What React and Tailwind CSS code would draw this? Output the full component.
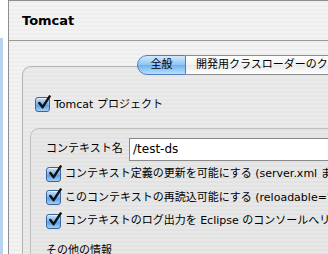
import React from "react";

const jp = { fontFamily: '"Lucida Grande", "DejaVu Sans", "Noto Sans CJK JP", sans-serif' };

function Check() {
  return (
    <div className="relative w-[15px] h-[15px] shrink-0 rounded-[3px] border border-[#35679e] bg-[linear-gradient(#c6e0fa,#76aee6_50%,#5598de_51%,#a2cff6)] shadow-[inset_0_1px_1px_rgba(255,255,255,0.7)]">
      <svg viewBox="0 0 16 16" className="absolute left-[1px] top-[-3px] w-[15px] h-[15px]">
        <path d="M2.5 8.5 L6 13 L13.5 1.5" fill="none" stroke="#111" strokeWidth="2.6" strokeLinecap="round" strokeLinejoin="round" />
      </svg>
    </div>
  );
}

function CheckRow({ children }) {
  return (
    <div className="flex items-center gap-[4px] h-[23.5px]">
      <Check />
      <span className="text-[11px] text-black whitespace-nowrap">{children}</span>
    </div>
  );
}

export default function App() {
  return (
    <div className="w-[328px] h-[254px] overflow-hidden flex bg-white" style={jp}>
      <div className="w-[8px] shrink-0 flex flex-col">
        <div className="h-[38px]" />
        <div className="w-[3px] flex-1 bg-[#b9d4ee]" />
      </div>
      <div className="flex-1 min-w-0 border-l border-t border-[#8e8e8e] bg-[repeating-linear-gradient(#eeeeee_0px,#eeeeee_2px,#f3f3f3_2px,#f3f3f3_4px)] flex flex-col">
        <div className="h-[40px] shrink-0 flex items-center pl-[13px] border-b border-[#9a9a9a]">
          <span className="text-[13px] font-bold text-black">Tomcat</span>
        </div>
        <div className="relative flex-1 pt-[25px] pl-[13px]">
          <div className="h-[200px] rounded-tl-[9px] border-l border-t border-[#b4b4b4] bg-[repeating-linear-gradient(#e6e6e6_0px,#e6e6e6_2px,#ebebeb_2px,#ebebeb_4px)] pl-[12px] pt-[26px]">
            <CheckRow>Tomcat プロジェクト</CheckRow>
            <div className="mt-[11px] ml-[-5px] h-[200px] rounded-tl-[9px] border-l border-t border-[#c0c0c0] bg-[repeating-linear-gradient(#e2e2e2_0px,#e2e2e2_2px,#e8e8e8_2px,#e8e8e8_4px)] pl-[15px] pt-[9px]">
              <div className="flex items-center h-[23px]">
                <span className="text-[11px] w-[83px] whitespace-nowrap">コンテキスト名</span>
                <div className="flex-1 h-[23px] bg-white border border-[#8a8a8a] border-r-0 flex items-center pl-[3px] text-[12px]">/test-ds</div>
              </div>
              <div className="mt-[2px] flex flex-col">
                <CheckRow>コンテキスト定義の更新を可能にする (server.xml または context.xml)</CheckRow>
                <CheckRow>このコンテキストの再読込可能にする (reloadable="true")</CheckRow>
                <CheckRow>コンテキストのログ出力を Eclipse のコンソールへリダイレクト</CheckRow>
              </div>
              <div className="mt-[10px] text-[11px] leading-[16px]">その他の情報</div>
            </div>
          </div>
          <div className="absolute top-[14px] left-[128px] flex h-[20px] text-[11px] whitespace-nowrap">
            <div className="w-[49px] flex items-center justify-center rounded-l-[10px] border border-[#4d7fc0] bg-[linear-gradient(#d4e9fd,#8ec3f3_50%,#6fb0ee_51%,#b9e0ff)]">全般</div>
            <div className="flex items-center pl-[10px] pr-[20px] border-y border-r border-[#8c8c8c] bg-[linear-gradient(#ffffff,#f3f3f3_50%,#e9e9e9_51%,#ffffff)]">開発用クラスローダーのクラスパス</div>
          </div>
        </div>
      </div>
    </div>
  );
}
